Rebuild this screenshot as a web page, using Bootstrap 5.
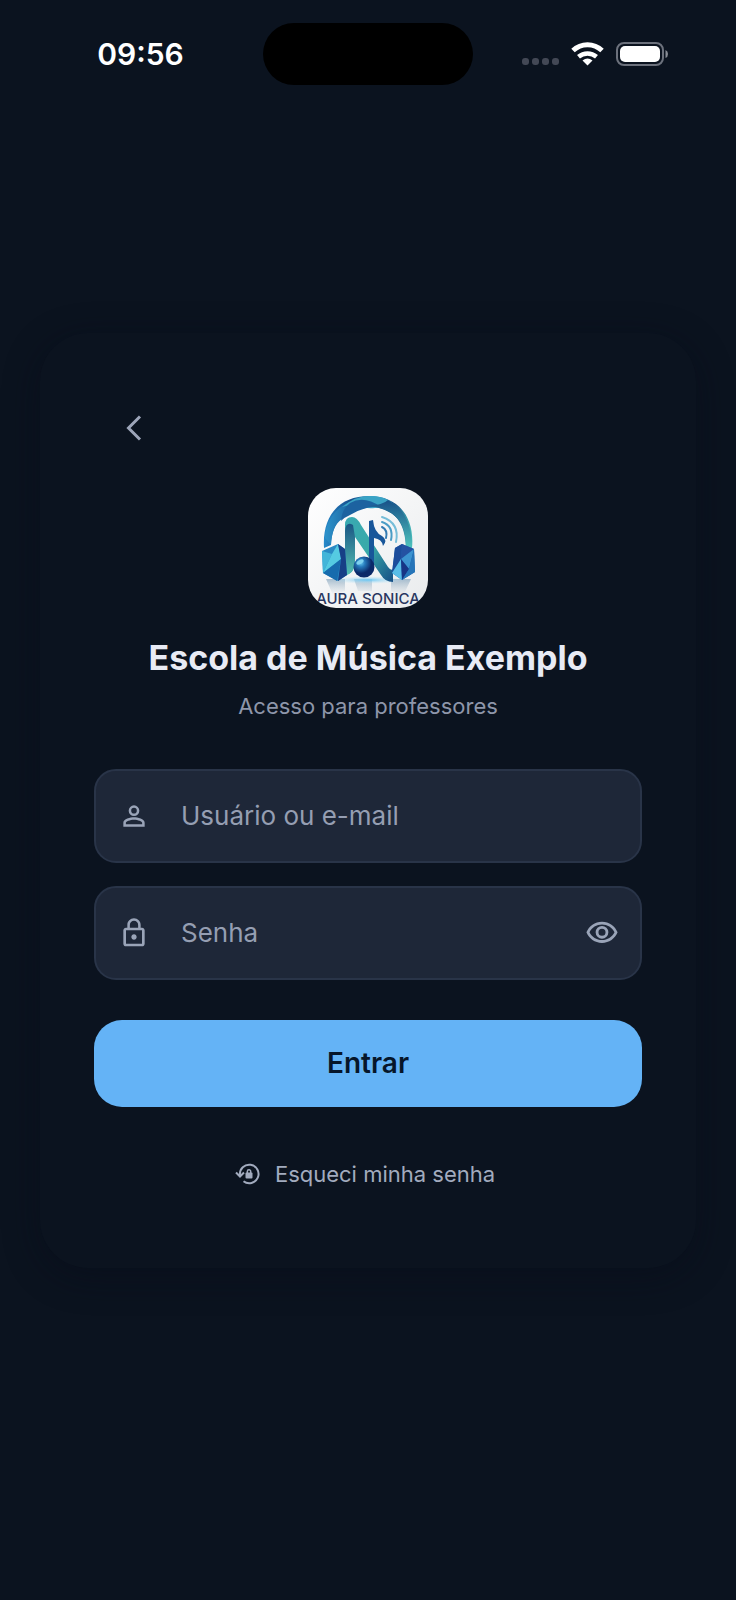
<!DOCTYPE html>
<html lang="pt-BR">
<head>
<meta charset="utf-8">
<meta name="viewport" content="width=device-width, initial-scale=1">
<title>Escola de Música Exemplo</title>
<link href="https://cdn.jsdelivr.net/npm/bootstrap@5.3.0/dist/css/bootstrap.min.css" rel="stylesheet">
<style>
  body { background: #0b131f; color: #e8ebf5; font-family: Inter, "Liberation Sans", sans-serif; }
  .status-bar { height: 108px; }
  .clock { font-size: 30px; line-height: 36px; font-weight: 600; color: #fff; padding-left: 18px; }
  .indicators { margin-right: 20px; }
  .island { width: 210px; height: 62px; background: #000; }
  .page-main { padding: 0 40px 108px; }
  .login-panel { padding: 63px 54px 79px; border-radius: 48px; background: #0b131f; box-shadow: 0 8px 36px rgba(6, 10, 24, .45); }
  .back-btn { width: 64px; height: 64px; margin-left: 8px; color: #9da5b9; }
  .brand { width: 120px; height: 120px; margin-top: 28px; border-radius: 28px; }
  .title { font-size: 34px; line-height: 44px; font-weight: 700; }
  .subtitle { font-size: 22px; line-height: 30px; margin-top: 11px; color: #8e96aa; }
  .fields { gap: 23px; }
  .field { height: 94px; padding: 0 21px 0 22px; background: #1e2738; border: 2px solid #293448; border-radius: 22px; color: #9aa4b8; }
  .field input { height: 60px; font-size: 26px; color: #e8ebf5; margin-left: 31px; }
  .field input::placeholder { color: #959eb2; opacity: 1; }
  .field input:focus { outline: none; }
  .reveal-btn { color: inherit; }
  .enter-btn, .enter-btn:hover { height: 87px; margin-top: 40px; border-radius: 28px; background: #64b3f6; color: #06162a; font-size: 28px; font-weight: 600; }
  .forgot { font-size: 22px; line-height: 30px; margin-top: 52px; padding-right: 6px; gap: 14px; color: #a2abbe; }
</style>
</head>
<body class="min-vh-100 d-flex flex-column">
<header class="status-bar row g-0 align-items-center">
  <div class="col text-center"><span class="clock">09:56</span></div>
  <div class="col-auto island rounded-pill"></div>
  <div class="col d-flex justify-content-center align-items-center">
    <svg class="indicators" width="146" height="26" viewBox="0 0 146 26" role="img" aria-label="Sinal, Wi-Fi e bateria">
      <g fill="#434855"><rect x="0" y="17" width="7" height="7" rx="3"/><rect x="10" y="17" width="7" height="7" rx="3"/><rect x="20" y="17" width="7" height="7" rx="3"/><rect x="30" y="17" width="7" height="7" rx="3"/></g>
      <g fill="none" stroke="#fff" stroke-width="5"><path d="M51 9.500a21 21 0 0 1 29 0"/><path d="M56.500 15.800a14 14 0 0 1 18 0" stroke-width="4.500"/></g>
      <path d="M65.500 24.500l-5-5q5-4 10 0z" fill="#fff"/>
      <rect x="95" y="2" width="46" height="22" rx="7" fill="none" stroke="#6c717c" stroke-width="2"/>
      <rect x="98" y="5" width="40" height="16" rx="5" fill="#fff"/>
      <path d="M143.500 9q2.500 1 2.500 4t-2.500 4z" fill="#888c95"/>
    </svg>
  </div>
</header>
<main class="page-main flex-grow-1 d-flex flex-column justify-content-center">
  <form class="login-panel d-flex flex-column" onsubmit="return false">
    <button type="button" class="back-btn btn p-0 border-0 d-flex align-items-center justify-content-center" aria-label="Voltar">
      <svg width="24" height="28" viewBox="0 0 24 28" fill="none" stroke="currentColor" stroke-width="3"><path d="M18 2.500L6.500 14 18 25.500"/></svg>
    </button>
    <svg class="brand align-self-center flex-shrink-0" viewBox="0 0 120 120" role="img" aria-label="Aura Sonica">
      <defs>
        <linearGradient id="paper" x2="1" y2="1"><stop stop-color="#fff"/><stop offset="1" stop-color="#e9ebed"/></linearGradient>
        <linearGradient id="band"><stop stop-color="#278aca"/><stop offset=".3" stop-color="#174d8c"/><stop offset=".55" stop-color="#2d9ec6"/><stop offset=".8" stop-color="#194f86"/><stop offset="1" stop-color="#49bdbb"/></linearGradient>
        <linearGradient id="wave" x2="1" y2="1"><stop stop-color="#39a9b2"/><stop offset=".5" stop-color="#39aaa9"/><stop offset="1" stop-color="#164e86"/></linearGradient>
        <linearGradient id="leg" x2="0" y2="1"><stop stop-color="#1b5684"/><stop offset="1" stop-color="#54c0b4"/></linearGradient>
        <linearGradient id="arch"><stop stop-color="#2c93cb"/><stop offset="1" stop-color="#174f8d"/></linearGradient>
        <linearGradient id="side" x2="0" y2="1"><stop stop-color="#185088"/><stop offset="1" stop-color="#4fc4bd"/></linearGradient>
        <radialGradient id="ball" cx=".35" cy=".3"><stop stop-color="#65c7f0"/><stop offset=".4" stop-color="#2478ba"/><stop offset="1" stop-color="#0b2968"/></radialGradient>
        <linearGradient id="mirror" x2="0" y2="1"><stop stop-color="#7398b5" stop-opacity=".6"/><stop offset="1" stop-color="#a9bac6" stop-opacity="0"/></linearGradient>
        <radialGradient id="glow"><stop stop-color="#6cc8f4"/><stop offset="1" stop-color="#cbe9f6" stop-opacity="0"/></radialGradient>
      </defs>
      <rect width="120" height="120" fill="url(#paper)"/>
      <path d="M18 91h19v12l-12 4zM83 91h20l-7 15-13-3zM46 91h18v12H50z" fill="url(#mirror)"/>
      <ellipse cx="60" cy="92" rx="36" ry="4" fill="url(#glow)"/>
      <path d="M16 60C14 28 31 8 61 8s46 22 43 52l-6-1C97 34 86 19 61 19S24 35 23 57z" fill="url(#band)"/>
      <path d="M17 50C18 26 37 11 55 12 43 17 41 25 34 31 26 37 24 44 23 57z" fill="url(#arch)"/>
      <path d="M34 19Q48 7 64 8q19 0 30 18-14-8-27-6-9 1-17-2-8-2-16 1z" fill="#3aa3c5"/>
      <path d="M42 15q14-8 31 4-14-2-31 8-5 2-9 6 1-12 9-18z" fill="#1c62a0"/>
      <path d="M80 12q24 13 24 48l-6-1C98 36 89 26 74 21q-8-3-14-3 15-1 20-6z" fill="url(#side)"/>
      <path d="M37 76V37q0-8 7-8 5 0 9 8l27 42q3 4 5 2V94q-8 0-12-7L47 49v24q0 13-10 14z" fill="url(#wave)"/>
      <path d="M37 43q1-10 8-6l2 12v23q0 12-10 16z" fill="url(#leg)"/>
      <path d="M61 81V33l4-1q1 12 9 16 6 4 1 10-1-7-9-8v31z" fill="#18569a"/>
      <circle cx="56" cy="79" r="10.500" fill="url(#ball)"/>
      <ellipse cx="52" cy="74" rx="4" ry="2" fill="#7ed1ef" transform="rotate(-30 52 74)"/>
      <g fill="none" stroke-width="2" stroke-linecap="round"><path d="M74 39q6 3 4 11" stroke="#347bb2"/><path d="M74 34q12 4 9 18" stroke="#4a9dc6"/><path d="M74 29q18 6 14 25" stroke="#76bdd8"/></g>
      <path d="M14 63l16-7 7 5 2 26-9 6-15-8z" fill="#2989c4"/><path d="M14 63l10 3-9 19z" fill="#43b5d9"/><path d="M24 66l6-10 3 15-18 14z" fill="#55cbe2"/><path d="M15 85l18-14-4 22z" fill="#176bad"/><path d="M30 56l7 5 2 26-9 6 3-22z" fill="#173f86"/>
      <path d="M87 60l7-4 12 5 1 23-13 8-10-7z" fill="#1d62ac"/><path d="M87 60l7-4-1 15-9 14z" fill="#1c4c9b"/><path d="M94 56l12 5-13 10z" fill="#2451a2"/><path d="M93 71l13-10-5 20z" fill="#3c93d0"/><path d="M84 85l9-14 1 21z" fill="#59bde7"/><path d="M93 71l8 10-7 11z" fill="#173585"/><path d="M106 61l1 23-13 8 7-11z" fill="#2675b9"/>
      <text x="60" y="116" text-anchor="middle" font-family="Inter, sans-serif" font-size="15" font-weight="500" fill="#29365f">AURA SONICA</text>
    </svg>
    <h1 class="title text-center mb-0 mt-4 pt-1">Escola de Música Exemplo</h1>
    <p class="subtitle text-center mb-0">Acesso para professores</p>
    <div class="fields d-flex flex-column mt-5">
      <div class="field d-flex align-items-center">
        <label for="usuario" class="d-flex"><svg width="32" height="32" viewBox="0 0 24 24" fill="currentColor" role="img" aria-label="Usuário ou e-mail"><path d="M12 5.900a2.100 2.100 0 1 1 0 4.200 2.100 2.100 0 0 1 0-4.200m0 9c3 0 6.100 1.500 6.100 2.100v1.100H5.900V17c0-.6 3.100-2.100 6.100-2.100M12 4a4 4 0 1 0 0 8 4 4 0 0 0 0-8zm0 9c-2.700 0-8 1.300-8 4v3h16v-3c0-2.700-5.300-4-8-4z"/></svg></label>
        <input id="usuario" type="text" class="flex-grow-1 w-100 bg-transparent border-0 p-0" placeholder="Usuário ou e-mail">
      </div>
      <div class="field d-flex align-items-center">
        <label for="senha" class="d-flex"><svg width="32" height="32" viewBox="0 0 24 24" fill="currentColor" role="img" aria-label="Senha"><path d="M18 8h-1V6c0-2.760-2.240-5-5-5S7 3.240 7 6v2H6c-1.100 0-2 .9-2 2v10c0 1.100.9 2 2 2h12c1.100 0 2-.9 2-2V10c0-1.100-.9-2-2-2zM8.900 6a3.100 3.100 0 0 1 6.200 0v2H8.900zM18 20H6V10h12zm-6-3c1.100 0 2-.9 2-2s-.9-2-2-2-2 .9-2 2 .9 2 2 2z"/></svg></label>
        <input id="senha" type="password" class="flex-grow-1 w-100 bg-transparent border-0 p-0" placeholder="Senha">
        <button type="button" class="reveal-btn btn p-0 border-0 d-flex" aria-label="Mostrar senha"><svg width="34" height="34" viewBox="0 0 24 24" fill="currentColor"><path d="M12 6c3.790 0 7.170 2.130 8.820 5.500C19.170 14.870 15.790 17 12 17s-7.170-2.130-8.820-5.500C4.830 8.130 8.210 6 12 6m0-2C7 4 2.730 7.110 1 11.500 2.730 15.890 7 19 12 19s9.270-3.110 11-7.500C21.270 7.110 17 4 12 4zm0 5a2.500 2.500 0 1 1 0 5 2.500 2.500 0 0 1 0-5m0-2a4.500 4.500 0 1 0 0 9 4.500 4.500 0 0 0 0-9z"/></svg></button>
      </div>
    </div>
    <button type="submit" class="enter-btn btn border-0 w-100">Entrar</button>
    <a href="#" class="forgot d-flex align-items-center justify-content-center text-decoration-none">
      <svg width="26" height="24" viewBox="0 0 26 24" fill="none" stroke="currentColor" stroke-width="2"><path d="M5 13a9.300 9.300 0 1 1 3.500 6.300"/><path d="M1 10.500l4 4 4-4"/><path d="M12.300 11V9.500a1.700 1.700 0 0 1 3.400 0V11" stroke-width="1.500"/><rect x="10.500" y="10.500" width="7" height="6" rx="1" fill="currentColor" stroke="none"/></svg>
      <span>Esqueci minha senha</span>
    </a>
  </form>
</main>
<script src="https://cdn.jsdelivr.net/npm/bootstrap@5.3.0/dist/js/bootstrap.bundle.min.js"></script>
</body>
</html>
